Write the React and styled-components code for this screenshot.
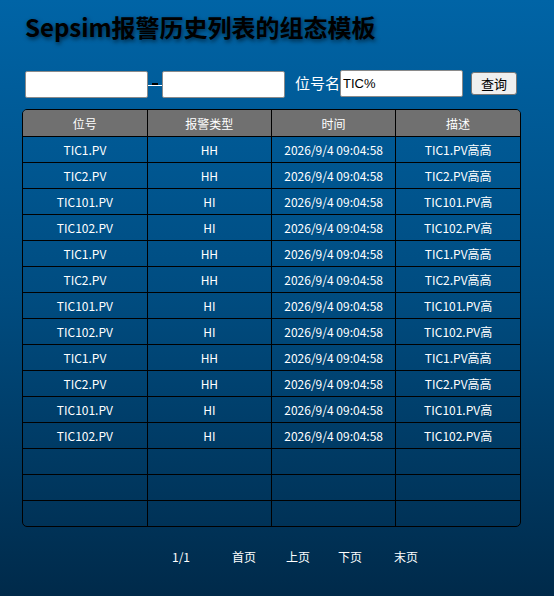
import React from 'react'
import styled, { createGlobalStyle } from 'styled-components'

const GlobalStyle = createGlobalStyle`
  html, body {
    margin: 0;
    padding: 0;
  }
  body {
    font-family: "Noto Sans CJK SC", "Noto Sans", sans-serif;
  }
`

const Page = styled.div`
  width: 554px;
  height: 596px;
  box-sizing: border-box;
  padding: 8px 0 0 22px;
  background: linear-gradient(to bottom, #0064a6 0%, #004c80 50%, #002a4a 100%);
  overflow: hidden;
`

const Title = styled.h1`
  margin: 0 0 0 3px;
  height: 38px;
  line-height: 38px;
  font-size: 24px;
  font-weight: bold;
  color: #000;
  text-shadow: 1px 2px 4px rgba(0, 0, 0, 0.6);
`

const SearchBar = styled.div`
  display: flex;
  align-items: center;
  margin: 23px 0 0 3px;
  height: 29px;
`

const TextBox = styled.input`
  box-sizing: border-box;
  width: 123px;
  height: 27px;
  margin-top: ${p => p.$offset || 0}px;
  border: 1px solid #8a8a8a;
  border-radius: 2px;
  background: #fff;
  padding: 0 2px;
  font-family: "Liberation Sans", Arial, sans-serif;
  font-size: 13px;
  color: #000;
  outline: none;
`

const Dash = styled.span`
  position: relative;
  width: 14px;
  height: 1px;
  margin-top: 3px;
  background: #fff;
  &::before {
    content: '';
    position: absolute;
    left: 4px;
    top: -2px;
    width: 6px;
    height: 2px;
    background: #000;
  }
`

const Label = styled.span`
  margin-left: 10px;
  color: #fff;
  font-size: 15px;
  line-height: 1;
  margin-top: -2px;
`

const Button = styled.button`
  box-sizing: border-box;
  width: 46px;
  height: 23px;
  margin-left: 8px;
  border: 1px solid #767676;
  border-radius: 3px;
  background: #efefef;
  font-family: "Noto Sans CJK SC", sans-serif;
  font-size: 13px;
  color: #000;
  padding: 0;
`

const TableFrame = styled.div`
  margin-top: 11px;
  width: 499px;
  box-sizing: border-box;
  border: 1px solid #000;
  border-radius: 5px;
  overflow: hidden;
`

const Table = styled.table`
  width: 100%;
  border-collapse: collapse;
  table-layout: fixed;
`

const HeadCell = styled.th`
  height: 26px;
  padding: 0;
  background: #707070;
  color: #fff;
  font-size: 12px;
  font-weight: normal;
  border-right: 1px solid #000;
  border-bottom: 1px solid #000;
  &:last-child { border-right: none; }
`

const Row = styled.tr`
  &:last-child td { border-bottom: none; }
`

const Cell = styled.td`
  height: 25px;
  padding: 0;
  color: #fff;
  font-size: 12px;
  text-align: center;
  border-right: 1px solid #000;
  border-bottom: 1px solid #000;
  &:last-child { border-right: none; }
`

const Pager = styled.div`
  display: flex;
  align-items: center;
  margin: 21px 0 0 150px;
  color: #fff;
  font-size: 12px;
`

const PageItem = styled.span`
  width: ${p => p.$w}px;
`

const base = [
  ['TIC1.PV', 'HH', 'TIC1.PV高高'],
  ['TIC2.PV', 'HH', 'TIC2.PV高高'],
  ['TIC101.PV', 'HI', 'TIC101.PV高'],
  ['TIC102.PV', 'HI', 'TIC102.PV高'],
]

const rows = [...base, ...base, ...base].map(([tag, type, desc]) => ({
  tag,
  type,
  time: '2026/9/4 09:04:58',
  desc,
}))

export default function App() {
  return (
    <>
      <GlobalStyle />
      <Page>
        <Title>Sepsim报警历史列表的组态模板</Title>
        <SearchBar>
          <TextBox $offset={2} />
          <Dash />
          <TextBox $offset={2} />
          <Label>位号名</Label>
          <TextBox defaultValue="TIC%" />
          <Button>查询</Button>
        </SearchBar>
        <TableFrame>
          <Table>
            <thead>
              <tr>
                <HeadCell>位号</HeadCell>
                <HeadCell>报警类型</HeadCell>
                <HeadCell>时间</HeadCell>
                <HeadCell>描述</HeadCell>
              </tr>
            </thead>
            <tbody>
              {rows.map((r, i) => (
                <Row key={i}>
                  <Cell>{r.tag}</Cell>
                  <Cell>{r.type}</Cell>
                  <Cell>{r.time}</Cell>
                  <Cell>{r.desc}</Cell>
                </Row>
              ))}
              {[0, 1, 2].map(i => (
                <Row key={'e' + i}>
                  <Cell />
                  <Cell />
                  <Cell />
                  <Cell />
                </Row>
              ))}
            </tbody>
          </Table>
        </TableFrame>
        <Pager>
          <PageItem $w={60}>1/1</PageItem>
          <PageItem $w={54}>首页</PageItem>
          <PageItem $w={52}>上页</PageItem>
          <PageItem $w={56}>下页</PageItem>
          <PageItem $w={40}>末页</PageItem>
        </Pager>
      </Page>
    </>
  )
}
